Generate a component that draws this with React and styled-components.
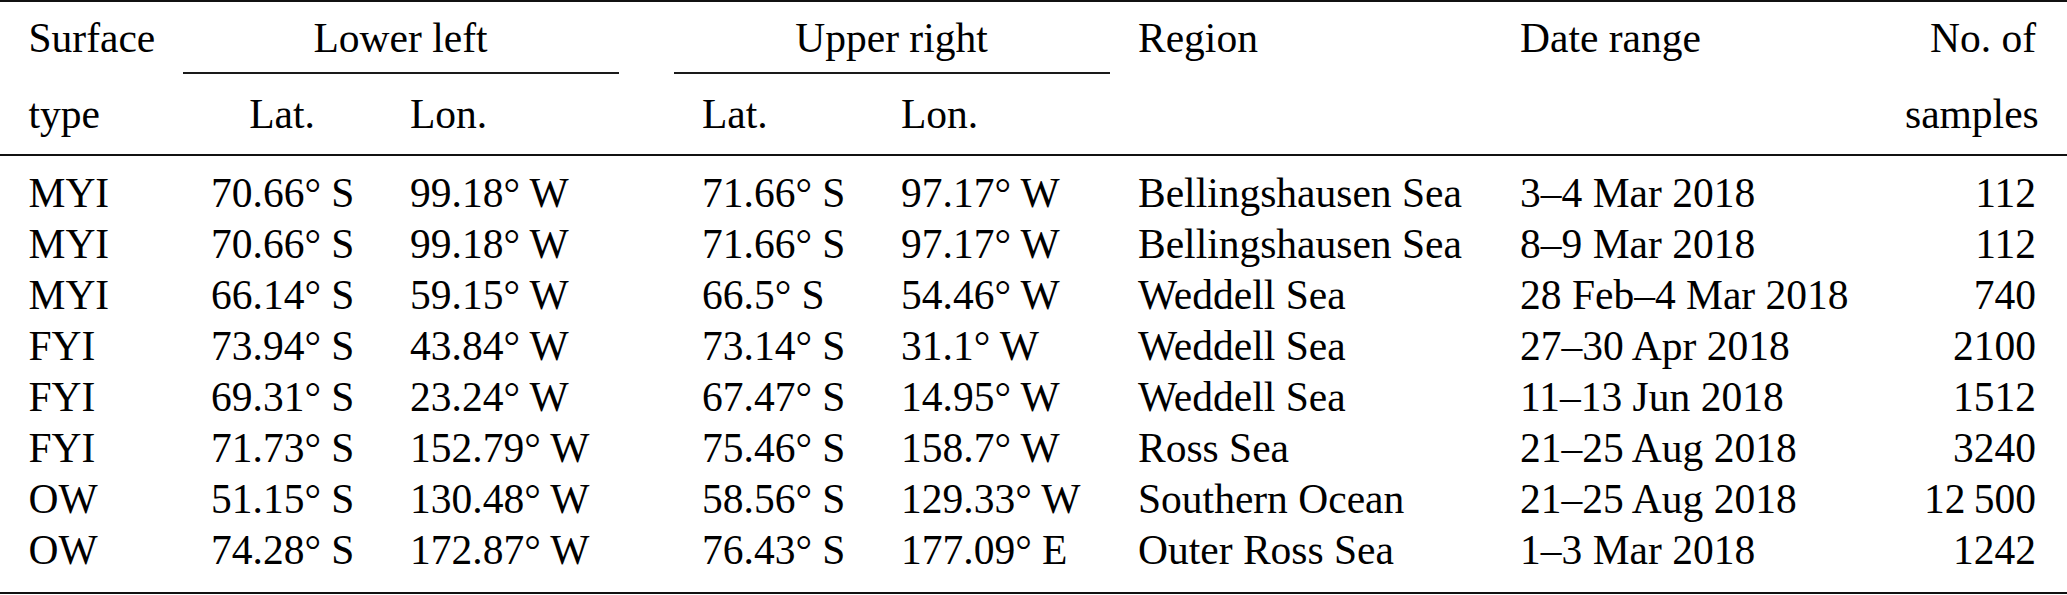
import styled, { createGlobalStyle } from "styled-components";

const GlobalStyle = createGlobalStyle`
  html, body {
    margin: 0;
    padding: 0;
    background: #fff;
  }
  body {
    font-family: "Liberation Serif", "Times New Roman", serif;
    color: #000;
  }
`;

// column widths incl. cell padding (LaTeX tabcolsep ~28.5px)
const columns = [182.5, 199, 237, 55, 199, 237, 382, 385, 190.5];

const rows = [
  ["MYI", "70.66° S", "99.18° W", "71.66° S", "97.17° W", "Bellingshausen Sea", "3–4 Mar 2018", "112"],
  ["MYI", "70.66° S", "99.18° W", "71.66° S", "97.17° W", "Bellingshausen Sea", "8–9 Mar 2018", "112"],
  ["MYI", "66.14° S", "59.15° W", "66.5° S", "54.46° W", "Weddell Sea", "28 Feb–4 Mar 2018", "740"],
  ["FYI", "73.94° S", "43.84° W", "73.14° S", "31.1° W", "Weddell Sea", "27–30 Apr 2018", "2100"],
  ["FYI", "69.31° S", "23.24° W", "67.47° S", "14.95° W", "Weddell Sea", "11–13 Jun 2018", "1512"],
  ["FYI", "71.73° S", "152.79° W", "75.46° S", "158.7° W", "Ross Sea", "21–25 Aug 2018", "3240"],
  ["OW", "51.15° S", "130.48° W", "58.56° S", "129.33° W", "Southern Ocean", "21–25 Aug 2018", "12\u2009500"],
  ["OW", "74.28° S", "172.87° W", "76.43° S", "177.09° E", "Outer Ross Sea", "1–3 Mar 2018", "1242"],
];

const App = () => {
  return (
    <>
      <GlobalStyle />
      <Table>
        <colgroup>
          {columns.map((w, i) => (
            <Col key={i} $w={w} />
          ))}
        </colgroup>
        <thead>
          <TopRow>
            <Cell>Surface</Cell>
            <GroupCell colSpan={2}>Lower left</GroupCell>
            <Spacer />
            <GroupCell colSpan={2}>Upper right</GroupCell>
            <Cell>Region</Cell>
            <Cell>Date range</Cell>
            <Cell $align="right">No. of</Cell>
          </TopRow>
          <SubRow>
            <Cell>type</Cell>
            <Cell $align="center">Lat.</Cell>
            <Cell>Lon.</Cell>
            <Spacer />
            <Cell>Lat.</Cell>
            <Cell>Lon.</Cell>
            <Cell />
            <Cell />
            <Cell $align="right">samples</Cell>
          </SubRow>
        </thead>
        <Body>
          {rows.map((r, i) => (
            <tr key={i}>
              <Cell>{r[0]}</Cell>
              <Cell>{r[1]}</Cell>
              <Cell>{r[2]}</Cell>
              <Spacer />
              <Cell>{r[3]}</Cell>
              <Cell>{r[4]}</Cell>
              <Cell>{r[5]}</Cell>
              <Cell>{r[6]}</Cell>
              <Cell $align="right">{r[7]}</Cell>
            </tr>
          ))}
        </Body>
      </Table>
    </>
  );
};

const Table = styled.table`
  width: 2067px;
  table-layout: fixed;
  border-collapse: separate;
  border-spacing: 0;
  border-top: 2px solid #111;
  border-bottom: 2px solid #111;
  font-size: 41.5px;
`;

const Col = styled.col`
  width: ${(p) => p.$w}px;
`;

const Cell = styled.td`
  box-sizing: border-box;
  padding: 0 28.5px;
  text-align: ${(p) => p.$align || "left"};
  white-space: nowrap;
  vertical-align: top;
  &:last-child {
    padding-right: 31px;
  }
`;

const Spacer = styled.td`
  padding: 0;
`;

const GroupCell = styled.td`
  box-sizing: border-box;
  padding: 0;
  text-align: center;
  white-space: nowrap;
  vertical-align: top;
`;

const TopRow = styled.tr`
  line-height: 46px;
  & > td {
    padding-top: 13px;
    padding-bottom: 11px;
  }
  & > ${GroupCell} {
    border-bottom: 2px solid #1a1a1a;
  }
`;

const SubRow = styled.tr`
  line-height: 46px;
  & > td {
    padding-top: 17px;
    padding-bottom: 17px;
    border-bottom: 2px solid #111;
  }
`;

const Body = styled.tbody`
  line-height: 51.14px;
  & > tr:first-child > td {
    padding-top: 11.5px;
  }
  & > tr:last-child > td {
    padding-bottom: 15px;
  }
`;

export default App;
